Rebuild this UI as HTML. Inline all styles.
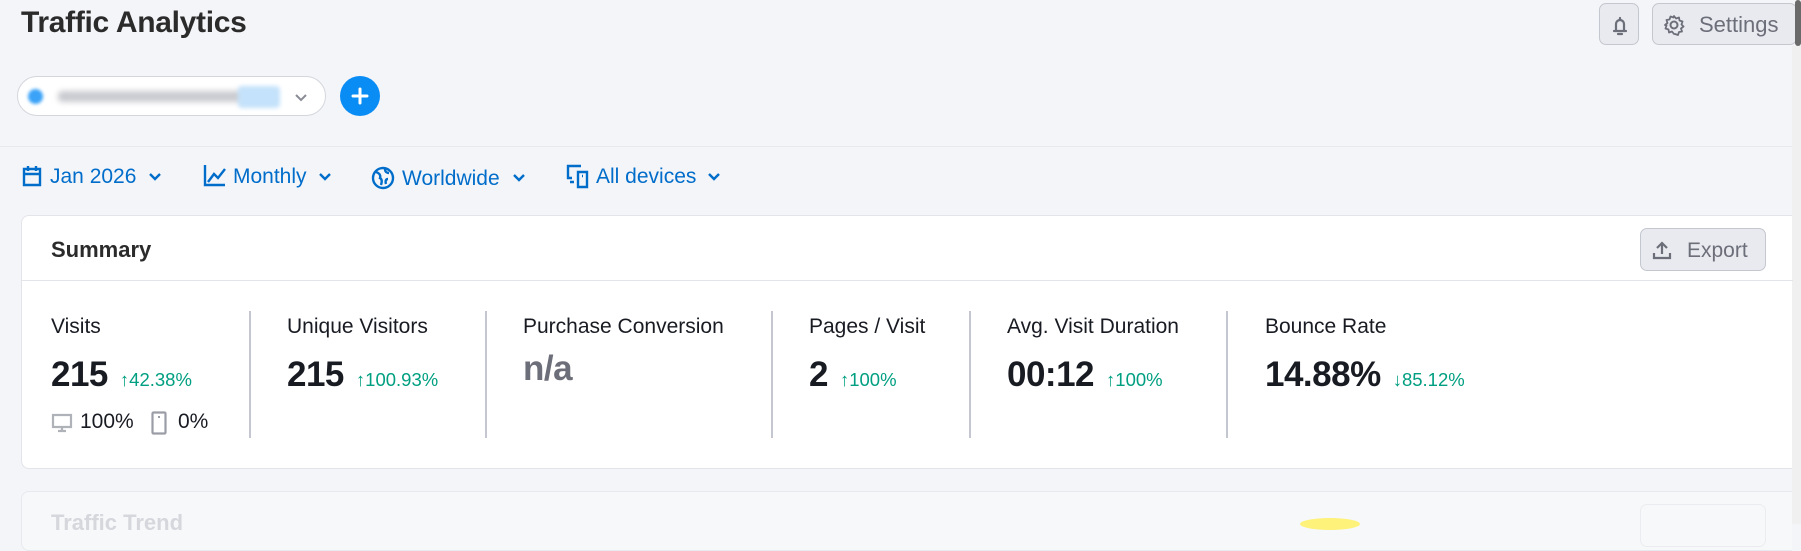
<!DOCTYPE html>
<html><head><style>
*{margin:0;padding:0;box-sizing:border-box}
body{width:1801px;height:524px;overflow:hidden;background:#f4f5f9;font-family:"Liberation Sans",sans-serif;position:relative;color:#191b23}
.a{position:absolute;white-space:nowrap}
.blue{color:#006dca;font-size:21px}
.lbl{font-size:21px;color:#191b23}
.val{font-size:35px;font-weight:bold;letter-spacing:-0.5px}
.chg{font-size:18.5px;color:#009f81;margin-left:12px;font-weight:normal;letter-spacing:0}
.div{position:absolute;top:311px;width:2px;height:127px;background:#c4c7cf}
.btn{position:absolute;border:1px solid #c4c7cf;background:#e9eaef;border-radius:7px}
</style></head><body>
<div class="a" style="left:21px;top:6px;font-size:30px;font-weight:bold;color:#2b2b2b;letter-spacing:-0.3px">Traffic Analytics</div>

<div class="btn" style="left:1599px;top:3px;width:40px;height:42px">
<svg width="40" height="42" viewBox="0 0 40 42"><path d="M14 27h12M16 27v-7a4 4 0 0 1 8 0v7M20 14v2M18 30h4" stroke="#6c6e79" stroke-width="2.2" fill="none" stroke-linecap="round"/></svg></div>
<div class="btn" style="left:1652px;top:3px;width:145px;height:42px">
<svg class="a" style="left:10px;top:10px" width="22" height="22" viewBox="0 0 22 22"><circle cx="11" cy="11" r="3.5" stroke="#6c6e79" stroke-width="2" fill="none"/><path d="M11 2l2 2.5 3-1 .5 3 3 1-1 3 2 2-2.5 2 1 3-3 .5-1 3-3-1L11 20l-2-2.5-3 1-.5-3-3-1 1-3L2 11l2.5-2-1-3 3-.5 1-3 3 1z" stroke="#6c6e79" stroke-width="1.8" fill="none" stroke-linejoin="round"/></svg>
<span class="a" style="left:46px;top:8px;font-size:22px;color:#6c6e79">Settings</span></div>
<div class="a" style="left:1792px;top:46px;width:9px;height:478px;background:#f0f0f0"></div>
<div class="a" style="left:1795px;top:0;width:6px;height:46px;background:#6a6a6a;border-radius:3px"></div>

<div class="a" style="left:17px;top:76px;width:309px;height:40px;background:#fff;border:1px solid #d4d6dc;border-radius:20px">
<div class="a" style="left:10px;top:12px;width:15px;height:15px;border-radius:50%;background:#3aa2f7;filter:blur(1.5px)"></div>
<div class="a" style="left:40px;top:14px;width:190px;height:11px;background:#c9cad0;filter:blur(3px);border-radius:4px"></div>
<div class="a" style="left:220px;top:9px;width:42px;height:22px;background:#c4e2fb;filter:blur(2px);border-radius:4px"></div>
<svg class="a" style="left:276px;top:13px" width="14" height="14" viewBox="0 0 14 14"><path d="M2 5l5 5 5-5" stroke="#8a8c95" stroke-width="2" fill="none"/></svg></div>
<div class="a" style="left:340px;top:76px;width:40px;height:40px;border-radius:50%;background:#0a8cf5"><svg width="40" height="40"><path d="M20 13v14M13 20h14" stroke="#fff" stroke-width="3" stroke-linecap="round"/></svg></div>
<div class="a" style="left:0;top:146px;width:1792px;height:1px;background:#e8e9ee"></div>

<svg class="a" style="left:21px;top:164px" width="22" height="24" viewBox="0 0 22 24"><path d="M3 5h16v16H3zM3 10h16M7 2v5M15 2v5" stroke="#006dca" stroke-width="2.4" fill="none"/></svg>
<div class="a blue" style="left:50px;top:165px">Jan 2026</div>
<svg class="a" style="left:148px;top:171px" width="14" height="12"><path d="M2 3l5 5 5-5" stroke="#006dca" stroke-width="2.4" fill="none"/></svg>
<svg class="a" style="left:203px;top:163px" width="24" height="24" viewBox="0 0 24 24"><path d="M2 2v20h20M5 19l6-8 4 4 7-9" stroke="#006dca" stroke-width="2.4" fill="none"/></svg>
<div class="a blue" style="left:233px;top:165px">Monthly</div>
<svg class="a" style="left:318px;top:171px" width="14" height="12"><path d="M2 3l5 5 5-5" stroke="#006dca" stroke-width="2.4" fill="none"/></svg>
<svg class="a" style="left:371px;top:166px" width="24" height="24" viewBox="0 0 24 24"><circle cx="12" cy="12" r="10" stroke="#006dca" stroke-width="2.4" fill="none"/><path d="M5 6c3 1 5 3 4 6 2 1 2 4 1 7M14 3c0 3 2 4 4 4M17 13c-2 0-3 2-2 5" stroke="#006dca" stroke-width="2.4" fill="none"/></svg>
<div class="a blue" style="left:402px;top:167px">Worldwide</div>
<svg class="a" style="left:512px;top:172px" width="14" height="12"><path d="M2 3l5 5 5-5" stroke="#006dca" stroke-width="2.4" fill="none"/></svg>
<svg class="a" style="left:565px;top:163px" width="26" height="26" viewBox="0 0 26 26"><path d="M16 3H3v12h4M5 19h4M13 9h9v15h-9z M17 13h1" stroke="#006dca" stroke-width="2.4" fill="none"/></svg>
<div class="a blue" style="left:596px;top:165px">All devices</div>
<svg class="a" style="left:707px;top:171px" width="14" height="12"><path d="M2 3l5 5 5-5" stroke="#006dca" stroke-width="2.4" fill="none"/></svg>

<div class="a" style="left:21px;top:215px;width:1771px;height:254px;background:#fff;border:1px solid #e3e4e9;border-radius:8px 0 0 8px;border-right:none">
<div class="a" style="left:0;top:64px;width:1771px;height:1px;background:#e3e4e9"></div>
<div class="a" style="left:29px;top:21px;font-size:22px;font-weight:bold;color:#2b2b2b">Summary</div>
<div class="btn" style="left:1618px;top:12px;width:126px;height:43px">
<svg class="a" style="left:10px;top:11px" width="22" height="20" viewBox="0 0 22 20"><path d="M11 14V3M6 8l5-5 5 5M3 13v5h16v-5" stroke="#6c6e79" stroke-width="2.2" fill="none"/></svg>
<span class="a" style="left:46px;top:10px;font-size:21px;color:#6c6e79">Export</span></div>
</div>

<div class="a lbl" style="left:51px;top:315px">Visits</div>
<div class="a val" style="left:51px;top:355px">215<span class="chg">↑42.38%</span></div>
<svg class="a" style="left:51px;top:412px" width="22" height="22" viewBox="0 0 22 22"><path d="M2 3h18v12H2zM11 15v3M7 19h8" stroke="#b0b2ba" stroke-width="2.2" fill="none"/></svg>
<div class="a" style="left:80px;top:410px;font-size:21px">100%</div>
<svg class="a" style="left:151px;top:411px" width="16" height="24" viewBox="0 0 16 24"><rect x="1.5" y="1.5" width="13" height="21" rx="1" stroke="#9b9da6" stroke-width="2.2" fill="none"/><path d="M8 5v2" stroke="#9b9da6" stroke-width="2"/></svg>
<div class="a" style="left:178px;top:410px;font-size:21px">0%</div>
<div class="div" style="left:249px"></div>
<div class="a lbl" style="left:287px;top:315px">Unique Visitors</div>
<div class="a val" style="left:287px;top:355px">215<span class="chg">↑100.93%</span></div>
<div class="div" style="left:485px"></div>
<div class="a lbl" style="left:523px;top:315px">Purchase Conversion</div>
<div class="a val" style="left:523px;top:349px;color:#6c6e79">n/a</div>
<div class="div" style="left:771px"></div>
<div class="a lbl" style="left:809px;top:315px">Pages / Visit</div>
<div class="a val" style="left:809px;top:355px">2<span class="chg">↑100%</span></div>
<div class="div" style="left:969px"></div>
<div class="a lbl" style="left:1007px;top:315px">Avg. Visit Duration</div>
<div class="a val" style="left:1007px;top:355px">00:12<span class="chg">↑100%</span></div>
<div class="div" style="left:1226px"></div>
<div class="a lbl" style="left:1265px;top:315px">Bounce Rate</div>
<div class="a val" style="left:1265px;top:355px">14.88%<span class="chg">↓85.12%</span></div>

<div class="a" style="left:21px;top:491px;width:1771px;height:60px;background:#f7f8fa;border:1px solid #e8e9ee;border-right:none;border-radius:8px 0 0 8px">
<div class="a" style="left:29px;top:18px;font-size:22px;font-weight:bold;color:#d6d7dc">Traffic Trend</div>
<div class="a" style="left:1618px;top:12px;width:126px;height:43px;border:1px solid #ececf0;border-radius:7px"></div>
</div>
<div class="a" style="left:1300px;top:518px;width:60px;height:12px;border-radius:50%;background:#fff27a"></div>
</body></html>
